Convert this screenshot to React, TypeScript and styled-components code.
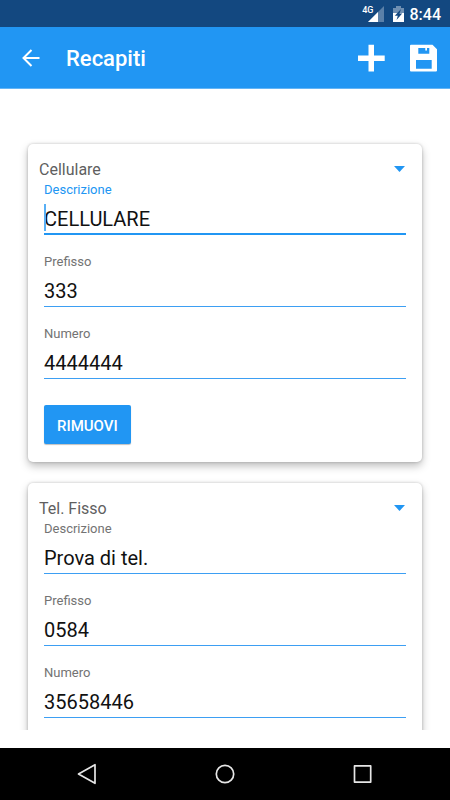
import React, { useId } from "react";
import styled, { createGlobalStyle, css } from "styled-components";

const BLUE = "#2196f3";

const GlobalStyle = createGlobalStyle`
  *, *::before, *::after { box-sizing: border-box; }
  body {
    margin: 0;
    background: #fff;
    font-family: Roboto, "Liberation Sans", sans-serif;
  }
  button, input, select { font-family: inherit; }
`;

const Screen = styled.div`
  display: flex;
  flex-direction: column;
  height: 100vh;
  overflow: hidden;
`;

const StatusBar = styled.div`
  flex: none;
  display: flex;
  align-items: center;
  justify-content: flex-end;
  height: 27px;
  padding: 0 9px 0 0;
  background: #134880;
  color: #fff;
`;

const Network = styled.span`
  align-self: flex-start;
  margin-top: 5px;
  font-size: 9px;
  line-height: 10px;
  font-weight: 500;
`;

const SignalIcon = styled.svg`
  margin-left: -6px;
  margin-right: 9px;
`;

const Clock = styled.span`
  margin-left: 6px;
  padding-top: 2px;
  font-size: 16px;
  line-height: 20px;
  font-weight: 500;
`;

const AppBar = styled.header`
  flex: none;
  display: flex;
  align-items: center;
  height: 62px;
  padding: 0 11px 0 17px;
  background: ${BLUE};
  border-bottom: 1px solid #64b5f6;
  color: #fff;
`;

const Title = styled.h1`
  flex: 1;
  margin: 0 0 0 21px;
  padding-top: 3px;
  font-size: 22px;
  line-height: 28px;
  font-weight: 500;
`;

const IconButton = styled.button`
  display: flex;
  align-items: center;
  justify-content: center;
  padding: 0;
  border: 0;
  background: none;
  color: inherit;
  cursor: pointer;
`;

const Actions = styled.div`
  display: flex;
  gap: 22px;
`;

const Content = styled.main`
  flex: 1;
  min-height: 0;
  margin-bottom: 18px;
  padding: 55px 28px 16px;
  display: flex;
  flex-direction: column;
  gap: 21px;
  overflow-y: auto;
  scrollbar-width: none;
`;

const Card = styled.section`
  flex: none;
  padding: 14px 16px 18px;
  border-radius: 5px;
  background: #fff;
  box-shadow: 0 4px 8px rgba(0, 0, 0, 0.26), 0 0 3px rgba(0, 0, 0, 0.2);
`;

const TypeRow = styled.div`
  display: flex;
  align-items: center;
  margin-left: -5px;
  height: 22px;
`;

const TypeSelect = styled.select`
  flex: 1;
  min-width: 0;
  height: 22px;
  padding: 0;
  border: 0;
  outline: 0;
  appearance: none;
  background: none;
  color: #5f5f5f;
  font-size: 16px;
`;

const Arrow = styled.svg`
  flex: none;
  margin-right: 1px;
  pointer-events: none;
`;

const Fields = styled.div`
  display: flex;
  flex-direction: column;
  gap: 17px;
`;

const Field = styled.div`
  position: relative;
  display: flex;
  flex-direction: column;
`;

const Label = styled.label<{ $active?: boolean }>`
  font-size: 13px;
  line-height: 20px;
  color: ${(p) => (p.$active ? BLUE : "#737373")};
`;

const TextInput = styled.input<{ $active?: boolean }>`
  width: 100%;
  height: 35px;
  padding: 4px 0 0;
  border: 0;
  border-bottom: 1px solid #3d9ff3;
  border-radius: 0;
  outline: 0;
  background: none;
  color: #111;
  font-size: 20px;
  ${(p) =>
    p.$active &&
    css`
      border-bottom: 2px solid ${BLUE};
      padding-top: 5px;
    `}
`;

const Caret = styled.span`
  position: absolute;
  left: 0;
  bottom: 4px;
  width: 2px;
  height: 27px;
  background: #58aff5;
`;

const RemoveButton = styled.button`
  display: block;
  height: 39px;
  margin-top: 26px;
  padding: 2px 13px 0;
  border: 0;
  border-radius: 2px;
  background: ${BLUE};
  box-shadow: 0 1px 1px rgba(0, 0, 0, 0.25);
  color: #fff;
  font-size: 15px;
  font-weight: 500;
  cursor: pointer;
`;

const NavBar = styled.nav`
  flex: none;
  display: flex;
  align-items: center;
  justify-content: center;
  gap: 110px;
  height: 52px;
  background: #000;
  color: #e6e6e6;
`;

type FieldData = { label: string; value: string; active?: boolean };

function TextField({ label, value, active }: FieldData) {
  const id = useId();
  return (
    <Field>
      <Label htmlFor={id} $active={active}>{label}</Label>
      <TextInput id={id} type="text" defaultValue={value} $active={active} />
      {active && <Caret />}
    </Field>
  );
}

function ContactCard({ type, fields }: { type: string; fields: FieldData[] }) {
  return (
    <Card>
      <TypeRow>
        <TypeSelect aria-label="Tipo" defaultValue={type}>
          <option>Cellulare</option>
          <option>Tel. Fisso</option>
        </TypeSelect>
        <Arrow width="11" height="6" viewBox="0 0 11 6">
          <path d="M0 0h11L5.500 6z" fill={BLUE} />
        </Arrow>
      </TypeRow>
      <Fields>
        {fields.map((f) => (
          <TextField key={f.label} {...f} />
        ))}
      </Fields>
      <RemoveButton type="button">RIMUOVI</RemoveButton>
    </Card>
  );
}

const contacts: { type: string; fields: FieldData[] }[] = [
  {
    type: "Cellulare",
    fields: [
      { label: "Descrizione", value: "CELLULARE", active: true },
      { label: "Prefisso", value: "333" },
      { label: "Numero", value: "4444444" },
    ],
  },
  {
    type: "Tel. Fisso",
    fields: [
      { label: "Descrizione", value: "Prova di tel." },
      { label: "Prefisso", value: "0584" },
      { label: "Numero", value: "35658446" },
    ],
  },
];

export default function App() {
  return (
    <Screen>
      <GlobalStyle />
      <StatusBar>
        <Network>4G</Network>
        <SignalIcon width="16" height="16" viewBox="0 0 16 16">
          <path d="M16 0v16H0z" fill="#5b80a8" />
          <path d="M10 6v10H0z" fill="#fff" />
        </SignalIcon>
        <svg width="11" height="16" viewBox="0 0 11 16">
          <path d="M3 0h5v2h3v5H0V2h3z" fill="#6f8fb2" />
          <path d="M0 7h11v9H0z" fill="#fff" />
          <path d="M8 3 1.800 9.700h3L3.500 14l5.700-6.500H6.500z" fill="#134880" />
        </svg>
        <Clock>8:44</Clock>
      </StatusBar>
      <AppBar>
        <IconButton type="button" aria-label="Indietro">
          <svg width="28" height="28" viewBox="0 0 28 28" fill="none" stroke="currentColor" strokeWidth="2">
            <path d="M22.500 14H6.500M14.500 6 6.500 14l8 8" />
          </svg>
        </IconButton>
        <Title>Recapiti</Title>
        <Actions>
          <IconButton type="button" aria-label="Aggiungi">
            <svg width="30" height="30" viewBox="0 0 30 30" fill="currentColor">
              <path d="M11.500 1.700h5.500v10.800h10.700v5.500H17v10.500h-5.500V18H1v-5.500h10.500z" />
            </svg>
          </IconButton>
          <IconButton type="button" aria-label="Salva">
            <svg width="30" height="30" viewBox="0 0 30 30" fill="currentColor" fillRule="evenodd">
              <path d="M2 1.700h21.500l4.500 4.500v21.300q0 1-1 1H2q-1 0-1-1V2.700q0-1 1-1zM9.300 5v5.700h11V5H18v2.400h-1.700V5zM7 17v8.700h15.700V17z" />
            </svg>
          </IconButton>
        </Actions>
      </AppBar>
      <Content>
        {contacts.map((c) => (
          <ContactCard key={c.type} {...c} />
        ))}
      </Content>
      <NavBar>
        <IconButton type="button" aria-label="Indietro">
          <svg width="28" height="28" viewBox="0 0 28 28" fill="none" stroke="currentColor" strokeWidth="1.700" strokeLinejoin="round">
            <path d="M22 4.700v18.600L5.500 14z" />
          </svg>
        </IconButton>
        <IconButton type="button" aria-label="Home">
          <svg width="28" height="28" viewBox="0 0 28 28" fill="none" stroke="currentColor" strokeWidth="1.700">
            <circle cx="14" cy="14" r="8.700" />
          </svg>
        </IconButton>
        <IconButton type="button" aria-label="Recenti">
          <svg width="28" height="28" viewBox="0 0 28 28" fill="none" stroke="currentColor" strokeWidth="1.700" strokeLinejoin="round">
            <path d="M5.500 5.900h16.200v16.200H5.500z" />
          </svg>
        </IconButton>
      </NavBar>
    </Screen>
  );
}
